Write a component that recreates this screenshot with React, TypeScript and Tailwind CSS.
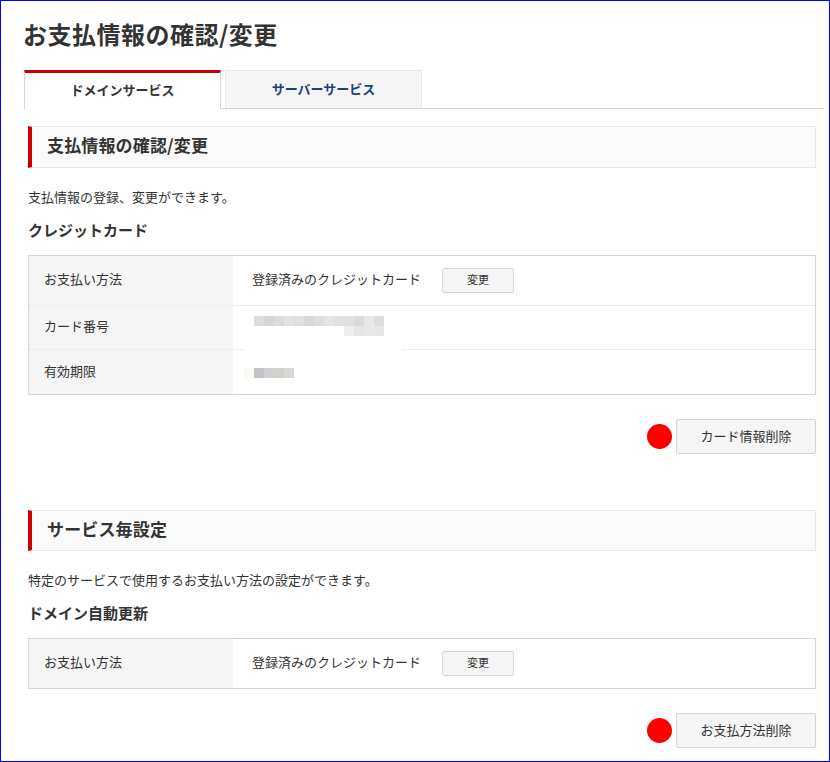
import React from 'react';

// Mosaic blocks that hide the card details
const cardRowTop = ['#dddcda', '#d6d6d8', '#dadbde', '#e3e3e3', '#e0dfdc', '#d7d7d7', '#dcdde1', '#e4e4e4', '#e1e0de', '#e0e0e0', '#dbdbdb', '#e6e7ea', '#dddddd'];
const cardRowBottom = ['#efeeec', '#e5e5e5', '#e6e7e9', '#e6e6e6'];
const expiryRow = ['#fcf8f3', '#c3c3c7', '#cfcfd1', '#d3d0cc', '#d6d7d9'];

const Mosaic = ({ colors }: { colors: string[] }) => (
  <div className="flex justify-end">
    {colors.map((color, i) => (
      <div key={i} className="w-[10px] h-[10px]" style={{ backgroundColor: color }} />
    ))}
  </div>
);

const SectionHeading = ({ title, className }: { title: string; className: string }) => (
  <h2 className={`ml-[27px] mr-[13px] flex items-center pl-[15px] pb-[4px] border border-l-4 border-[#e8e8e8] border-l-[#cc0000] bg-[#fafafa] text-[17px] font-bold tracking-[0.15px] ${className}`}>
    {title}
  </h2>
);

const Description = ({ text }: { text: string }) => (
  <p className="ml-[27px] mt-[19px] h-[20px] leading-[20px]">{text}</p>
);

const SubHeading = ({ text }: { text: string }) => (
  <h3 className="ml-[27px] mt-[13px] h-[20px] text-[15px] font-bold leading-[20px]">{text}</h3>
);

const Row = ({ label, height, last, children }: { label: string; height: string; last?: boolean; children: React.ReactNode }) => (
  <div className={`flex ${height} ${last ? '' : 'border-b border-dotted border-[#dddddd]'}`}>
    <div className="w-[204px] flex items-center pl-[15px] pb-[3px] bg-[#f5f5f5]">{label}</div>
    <div className="flex-1 flex items-center">{children}</div>
  </div>
);

const PaymentValue = () => (
  <div className="flex items-center pl-[19px]">
    <span className="pb-[3px]">登録済みのクレジットカード</span>
    <button className="ml-[21px] w-[72px] h-[25px] pb-[2px] rounded-[2px] border border-[#d5d5d5] bg-[#f5f5f5] text-[11px]">
      変更
    </button>
  </div>
);

const DeleteAction = ({ label }: { label: string }) => (
  <div className="mr-[13px] mt-[24px] flex items-center justify-end">
    <div className="w-[25px] h-[25px] rounded-full bg-[#ff0000]" />
    <button className="ml-[4px] w-[140px] h-[35px] pb-[2px] rounded-[2px] border border-[#d5d5d5] bg-[#f5f5f5] text-[13px]">
      {label}
    </button>
  </div>
);

export default function App() {
  return (
    <div
      className="w-[830px] h-[762px] overflow-hidden border border-[#0000ff] bg-white text-[13px] text-[#333333]"
      style={{ fontFamily: '"Noto Sans CJK JP", "Noto Sans", sans-serif' }}
    >
      <h1 className="ml-[22px] mt-[16px] h-[34px] text-[24px] font-bold leading-[34px] tracking-[0.5px]">お支払情報の確認/変更</h1>

      {/* Tabs */}
      <div className="ml-[23px] mr-[5px] mt-[19px] flex h-[39px] border-b border-[#d5d5d5]">
        <div className="w-[197px] h-[39px] pb-[3px] flex items-center justify-center border-x border-[#d5d5d5] border-t-[3px] border-t-[#cc0000] bg-white font-bold">
          ドメインサービス
        </div>
        <div className="ml-[4px] w-[197px] h-[38px] pb-[1px] flex items-center justify-center border border-b-0 border-[#e8e8e8] bg-[#f5f5f5] font-bold text-[#1c3f7c]">
          サーバーサービス
        </div>
      </div>

      <SectionHeading title="支払情報の確認/変更" className="mt-[17px] h-[42px]" />
      <Description text="支払情報の登録、変更ができます。" />
      <SubHeading text="クレジットカード" />

      <div className="ml-[27px] mr-[13px] mt-[15px] border border-[#d5d5d5]">
        <Row label="お支払い方法" height="h-[50px]">
          <PaymentValue />
        </Row>
        <div className="relative">
          <Row label="カード番号" height="h-[44px]">
            <div className="ml-[21px] w-[130px] -mt-[3px]">
              <Mosaic colors={cardRowTop} />
              <Mosaic colors={cardRowBottom} />
            </div>
          </Row>
          {/* the mosaic also wiped this part of the dotted line */}
          <div className="absolute left-[215px] bottom-[-1px] w-[157px] h-[3px] bg-white" />
        </div>
        <Row label="有効期限" height="h-[44px]" last>
          <div className="ml-[11px] w-[50px] mt-[1px]">
            <Mosaic colors={expiryRow} />
          </div>
        </Row>
      </div>

      <DeleteAction label="カード情報削除" />

      <SectionHeading title="サービス毎設定" className="mt-[56px] h-[41px]" />
      <Description text="特定のサービスで使用するお支払い方法の設定ができます。" />
      <SubHeading text="ドメイン自動更新" />

      <div className="ml-[27px] mr-[13px] mt-[15px] border border-[#d5d5d5]">
        <Row label="お支払い方法" height="h-[49px]" last>
          <PaymentValue />
        </Row>
      </div>

      <DeleteAction label="お支払方法削除" />
    </div>
  );
}
